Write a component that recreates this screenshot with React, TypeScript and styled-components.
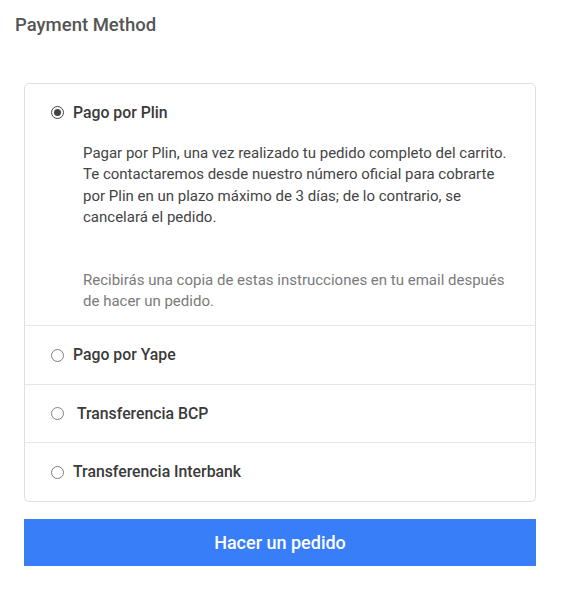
import React, { useState } from "react";
import styled, { createGlobalStyle } from "styled-components";

const Global = createGlobalStyle`
  html, body { margin: 0; padding: 0; background: #fff; }
  body { font-family: Roboto, "Liberation Sans", Arial, sans-serif; -webkit-font-smoothing: antialiased; }
  * { box-sizing: border-box; }
`;

const Page = styled.div`
  width: 583px;
  padding: 13px 47px 0 24px;
`;

const Heading = styled.h2`
  margin: 0 0 46px -9px;
  font-size: 18.5px;
  line-height: 24px;
  font-weight: 500;
  color: #555;
`;

const Card = styled.div`
  border: 1px solid #e0e0e0;
  border-radius: 5px;
  background: #fff;
`;

const Row = styled.div`
  border-top: 1px solid #e6e6e6;
  &:first-child { border-top: none; }
`;

const Option = styled.label`
  display: flex;
  align-items: center;
  height: 57.5px;
  padding-left: 26px;
  gap: 9px;
  cursor: pointer;
`;

const Radio = styled.span<{ $checked: boolean }>`
  width: 13px;
  height: 13px;
  border-radius: 50%;
  border: 1px solid ${(p) => (p.$checked ? "#444" : "#7f7f7f")};
  display: inline-flex;
  align-items: center;
  justify-content: center;
  flex: none;
  &::after {
    content: "";
    width: 7px;
    height: 7px;
    border-radius: 50%;
    background: #444;
    display: ${(p) => (p.$checked ? "block" : "none")};
  }
`;

const Label = styled.span`
  font-size: 15.8px;
  line-height: 20px;
  font-weight: 500;
  color: #3a3a3a;
`;

const Description = styled.div`
  padding: 1.5px 18px 13px 58px;
  font-size: 15px;
  line-height: 21.4px;
`;

const Para = styled.p<{ $muted?: boolean }>`
  margin: 0;
  color: ${(p) => (p.$muted ? "#7a7a7a" : "#444")};
  & + & { margin-top: 41px; }
`;

const Submit = styled.button`
  display: block;
  width: 100%;
  margin-top: 17px;
  height: 47px;
  border: none;
  background: #377ef8;
  color: #fff;
  font-family: inherit;
  font-size: 18px;
  font-weight: 500;
  cursor: pointer;
`;

const methods = [
  { id: "plin", label: "Pago por Plin" },
  { id: "yape", label: "Pago por Yape" },
  { id: "bcp", label: "\u00a0Transferencia BCP" },
  { id: "interbank", label: "Transferencia Interbank" },
];

export default function App() {
  const [selected, setSelected] = useState("plin");
  return (
    <Page>
      <Global />
      <Heading>Payment Method</Heading>
      <Card>
        {methods.map((m) => (
          <Row key={m.id}>
            <Option onClick={() => setSelected(m.id)}>
              <Radio $checked={selected === m.id} />
              <Label>{m.label}</Label>
            </Option>
            {selected === m.id && m.id === "plin" && (
              <Description>
                <Para>
                  Pagar por Plin, una vez realizado tu pedido completo del carrito. Te contactaremos desde
                  nuestro número oficial para cobrarte por Plin en un plazo máximo de 3 días; de lo
                  contrario, se cancelará el pedido.
                </Para>
                <Para $muted>
                  Recibirás una copia de estas instrucciones en tu email después de hacer un pedido.
                </Para>
              </Description>
            )}
          </Row>
        ))}
      </Card>
      <Submit>Hacer un pedido</Submit>
    </Page>
  );
}
